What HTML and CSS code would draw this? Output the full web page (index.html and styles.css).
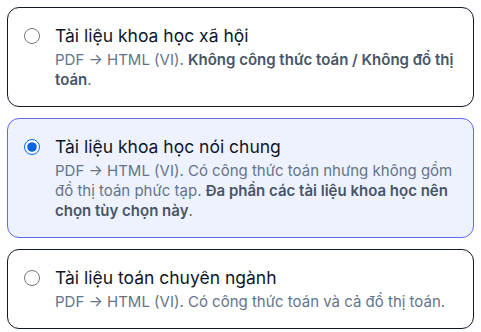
FILE: index.html
```html
<!DOCTYPE html>
<html lang="vi">
<head>
    <meta charset="UTF-8">
    <meta name="viewport" content="width=device-width, initial-scale=1.0">
    <title>Chọn loại tài liệu</title>
    <link rel="stylesheet" href="styles.css">
</head>
<body>
    <div class="options">
        <label class="option">
            <input type="radio" name="doc-type" value="social">
            <div class="option-text">
                <div class="option-title">Tài liệu khoa học xã hội</div>
                <p class="option-desc">PDF → HTML (VI). <strong>Không công thức toán / Không đổ thị toán</strong>.</p>
            </div>
        </label>
        <label class="option selected">
            <input type="radio" name="doc-type" value="general" checked>
            <div class="option-text">
                <div class="option-title">Tài liệu khoa học nói chung</div>
                <p class="option-desc">PDF → HTML (VI). Có công thức toán nhưng không gồm đồ thị toán phức tạp. <strong>Đa phần các tài liệu khoa học nên chọn tùy chọn này</strong>.</p>
            </div>
        </label>
        <label class="option">
            <input type="radio" name="doc-type" value="math">
            <div class="option-text">
                <div class="option-title">Tài liệu toán chuyên ngành</div>
                <p class="option-desc">PDF → HTML (VI). Có công thức toán và cả đồ thị toán.</p>
            </div>
        </label>
    </div>

    <script>
        document.querySelectorAll('.option input').forEach(input => {
            input.addEventListener('change', () => {
                document.querySelectorAll('.option').forEach(opt => {
                    opt.classList.toggle('selected', opt.contains(input) && input.checked);
                });
            });
        });
    </script>
</body>
</html>
```

FILE: styles.css
```css
body {
    margin: 0;
    padding: 7px;
    font-family: 'Inter', 'Noto Sans', sans-serif;
    background-color: #ffffff;
}

.options {
    display: flex;
    flex-direction: column;
    gap: 11px;
}

.option {
    display: flex;
    align-items: flex-start;
    gap: 15px;
    padding: 16px;
    border: 1px solid #111827;
    border-radius: 12px;
    background-color: #ffffff;
    cursor: pointer;
}

.option.selected {
    border-color: #6366f1;
    background-color: #eef2ff;
}

.option input {
    width: 16px;
    height: 16px;
    margin: 4px 0 0 0;
    flex-shrink: 0;
    accent-color: #0b63e5;
}

.option-text {
    flex: 1;
}

.option-title {
    font-size: 17.5px;
    line-height: 24px;
    color: #0f172a;
}

.option-desc {
    margin: 2px 0 0 0;
    font-size: 15px;
    line-height: 20px;
    color: #64748b;
}

.option-desc strong {
    font-weight: 600;
    color: #475569;
}
```
